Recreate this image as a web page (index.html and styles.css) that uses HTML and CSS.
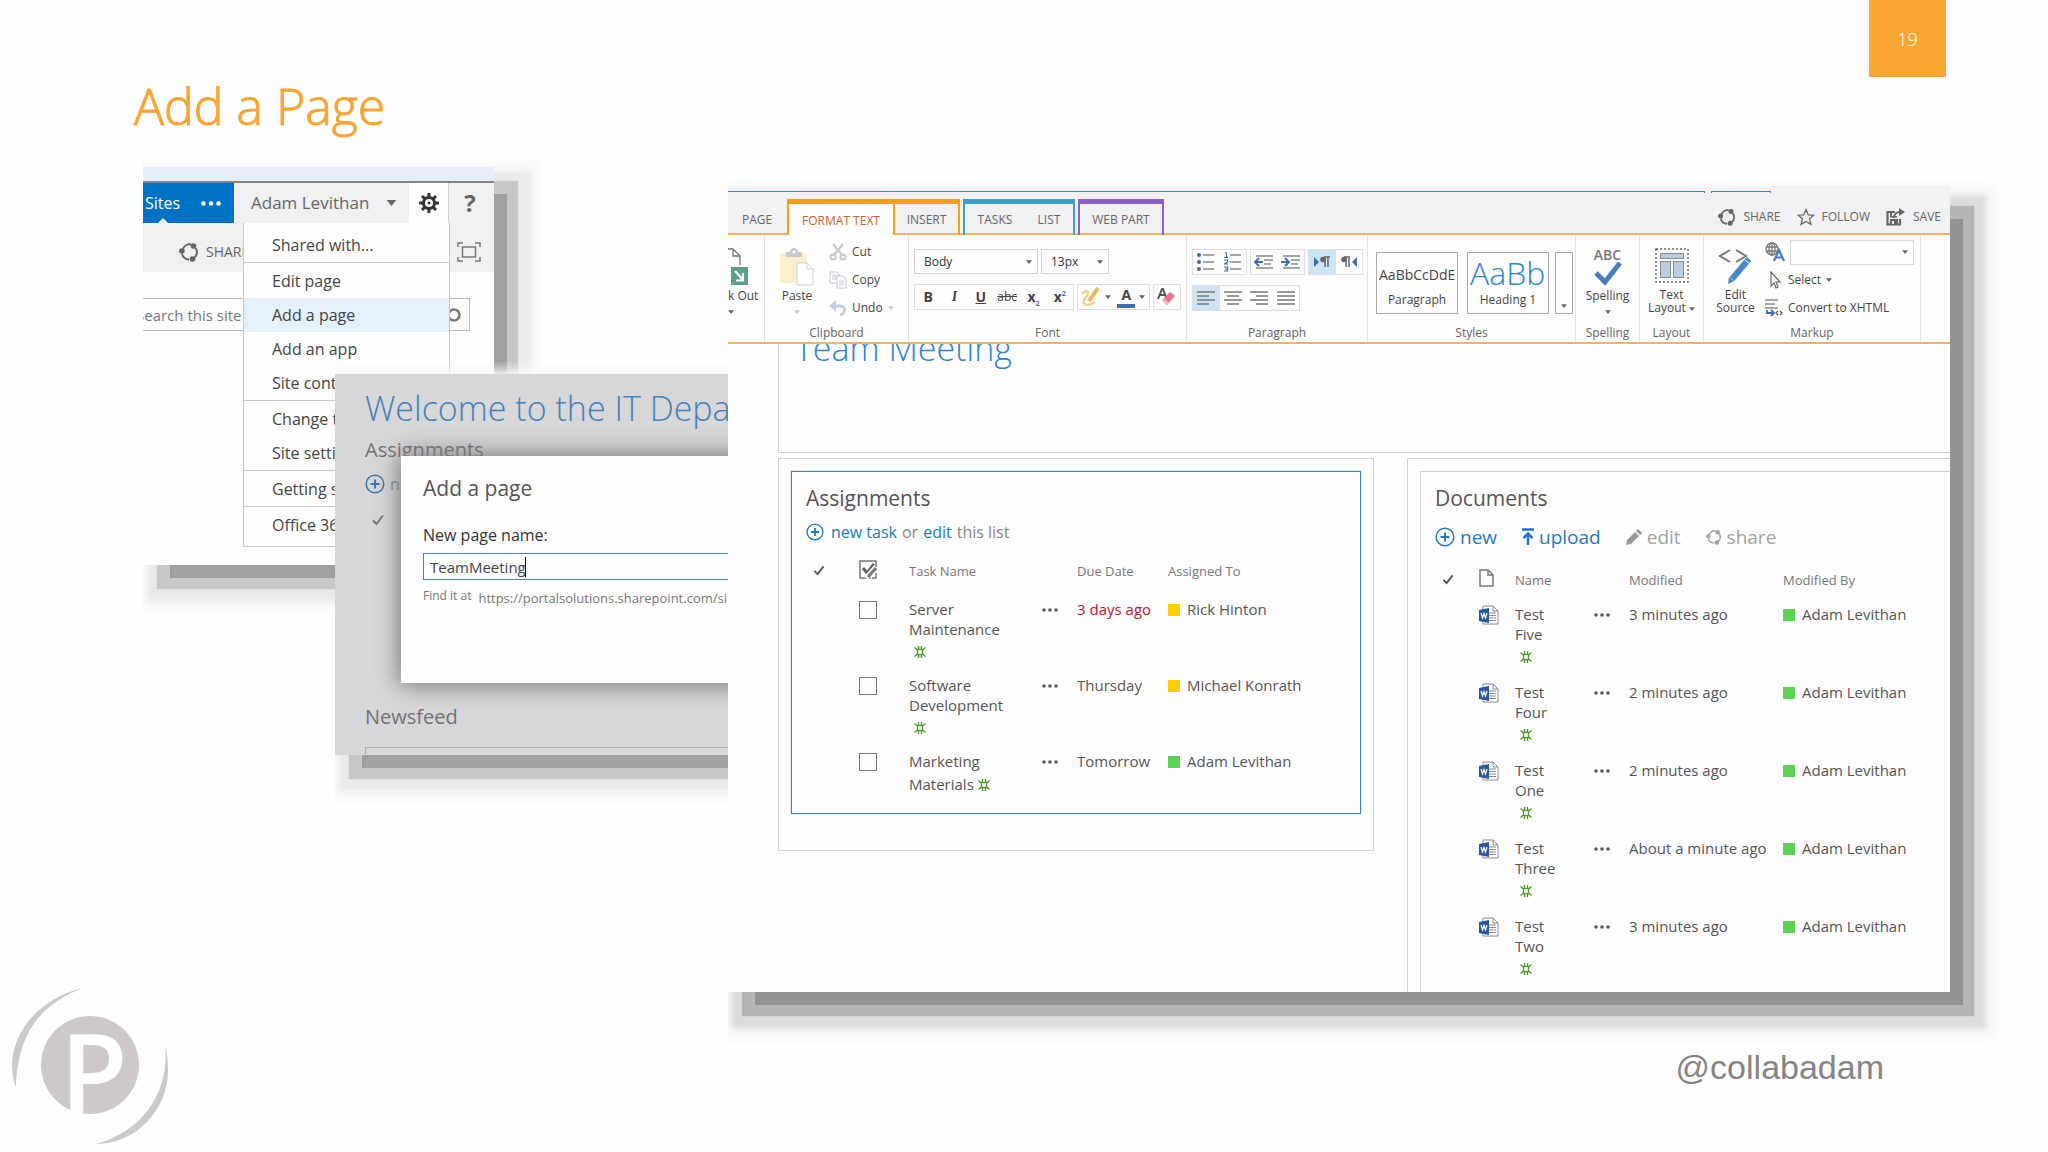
FILE: index.html
```html
<!DOCTYPE html>
<html lang="en">
<head>
<meta charset="utf-8">
<title>Add a Page</title>
<link rel="stylesheet" href="styles.css">
</head>
<body>
<svg class="sprite" aria-hidden="true">
  <symbol id="share" viewBox="0 0 20 20"><g fill="none" stroke="currentColor" stroke-width="2"><path d="M4 7a7 7 0 0 1 8-4.500M16.500 6a7 7 0 0 1-1 9.500M10 17.500A7.500 7.500 0 0 1 3 12"/></g><g fill="currentColor"><circle cx="14.500" cy="4" r="2.800"/><circle cx="2.900" cy="9" r="2.800"/><circle cx="13.500" cy="17" r="2.800"/></g></symbol>
  <symbol id="plus" viewBox="0 0 20 20"><circle cx="10" cy="10" r="8.800" fill="none" stroke="currentColor" stroke-width="1.500"/><path d="M10 5.500v9M5.500 10h9" stroke="currentColor" stroke-width="2"/></symbol>
  <symbol id="tick" viewBox="0 0 12 12"><path d="M1 6.500 4.500 10 11 1.500" fill="none" stroke="currentColor" stroke-width="2"/></symbol>
  <symbol id="new" viewBox="0 0 12 12"><rect x="3.500" y="3.500" width="5" height="5" fill="none" stroke="currentColor" stroke-width="1.300"/><path d="M.5 1.500l3 2.500M11.500 1.500l-3 2.500M.5 10.500l3-2.500M11.500 10.500l-3-2.500M4.500 0v3M7.500 0v3M4.500 9v3M7.500 9v3" stroke="currentColor" stroke-width="1.400"/></symbol>
  <symbol id="dots" viewBox="0 0 16 4"><g fill="currentColor"><circle cx="2" cy="2" r="1.800"/><circle cx="8" cy="2" r="1.800"/><circle cx="14" cy="2" r="1.800"/></g></symbol>
  <symbol id="down" viewBox="0 0 8 5"><path d="M0 0h8L4 5z" fill="currentColor"/></symbol>
  <symbol id="word" viewBox="0 0 20 20"><path d="M4 1h10l5 5v13H4z" fill="#fff" stroke="#8a8a90"/><path d="M14 1v5h5M9 8h8M9 10.500h8M9 13h8M9 15.500h8" fill="none" stroke="#8a8a90"/><path d="M0 5l10-2v15L0 16z" fill="#2b579a"/><path d="M2 8l1.500 5L5 8.500 6.500 13 8 8" fill="none" stroke="#fff" stroke-width="1.200"/></symbol>
</svg>

<main class="slide">
  <h1 class="slide-title">Add a Page</h1>
  <div class="slide-number">19</div>

  <section class="shot menu-shot">
    <div class="strip"></div>
    <nav class="suite">
      <a class="sites" href="#">Sites <svg class="dots-big"><use href="#dots"/></svg></a>
      <button class="user">Adam Levithan <svg class="caret-big"><use href="#down"/></svg></button>
      <button class="gear" aria-label="Settings"><svg width="20" height="20" viewBox="0 0 20 20"><circle cx="10" cy="10" r="5.500" fill="none" stroke="#333" stroke-width="3"/><circle cx="10" cy="10" r="1.500" fill="#333"/><path d="M10 0v4M10 16v4M0 10h4M16 10h4M3 3l3 3M14 14l3 3M17 3l-3 3M6 14l-3 3" stroke="#333" stroke-width="3"/></svg></button>
      <button class="help">?</button>
    </nav>
    <div class="share-row">
      <button class="share-btn"><svg class="i20"><use href="#share"/></svg>SHARE</button>
      <button class="focus" aria-label="Focus"><svg width="24" height="20" viewBox="0 0 24 20" fill="none" stroke="#777"><path d="M1 5V1h5M18 1h5v4M23 15v4h-5M6 19H1v-4" stroke-width="1.500"/><rect x="5.500" y="5" width="13" height="10" stroke-width="1.500"/></svg></button>
    </div>
    <div class="search">
      <input type="text" placeholder="Search this site" aria-label="Search this site">
      <button aria-label="Search"><svg width="16" height="16" viewBox="0 0 16 16" fill="none" stroke="#777" stroke-width="2.500"><circle cx="8" cy="7" r="5.500"/><path d="M4 11l-3 4"/></svg></button>
    </div>
    <ul class="menu">
      <li><a href="#">Shared with...</a></li>
      <li class="rule"><a href="#">Edit page</a></li>
      <li><a class="on" href="#">Add a page</a></li>
      <li><a href="#">Add an app</a></li>
      <li><a href="#">Site contents</a></li>
      <li class="rule"><a href="#">Change the look</a></li>
      <li><a href="#">Site settings</a></li>
      <li class="rule"><a href="#">Getting started</a></li>
      <li class="rule"><a href="#">Office 365</a></li>
    </ul>
  </section>

  <section class="shot dialog-shot">
    <h2 class="welcome">Welcome to the IT Depa</h2>
    <h3 class="dim">Assignments</h3>
    <p class="dim-new"><svg class="i20"><use href="#plus"/></svg>new task</p>
    <svg class="dim-tick"><use href="#tick"/></svg>
    <h3 class="dim feed">Newsfeed</h3>
    <div class="feed-box"></div>
    <form class="dialog">
      <h3>Add a page</h3>
      <label for="page-name">New page name:</label>
      <div class="name-box"><input id="page-name" type="text" value="TeamMeeting"><i class="cursor"></i></div>
      <p><span>Find it at</span> <span class="url">https://portalsolutions.sharepoint.com/si</span></p>
    </form>
  </section>

  <section class="shot page-shot">
    <div class="topline"><i></i><i></i></div>
    <div class="tabs">
      <button class="tab page">PAGE</button>
      <div class="tabset orange"><button class="tab current">FORMAT TEXT</button><button class="tab insert">INSERT</button></div>
      <div class="tabset teal"><button class="tab">TASKS</button><button class="tab">LIST</button></div>
      <div class="tabset purple"><button class="tab">WEB PART</button></div>
      <div class="promoted">
        <button><svg width="18" height="18"><use href="#share"/></svg>SHARE</button>
        <button><svg width="18" height="18" viewBox="0 0 18 18"><path d="M9 1.500l2.200 5.300 5.600.4-4.300 3.600 1.400 5.600L9 13.400l-4.900 3 1.400-5.600L1.200 7.200l5.600-.4z" fill="none" stroke="currentColor" stroke-width="1.300"/></svg>FOLLOW</button>
        <button><svg width="20" height="18" viewBox="0 0 20 18"><path d="M9 4H1.500v12.500H14V11" fill="none" stroke="currentColor" stroke-width="2.200"/><path d="M4 11h8v6H4zM4 4h2v4h5v1.500H4z" fill="currentColor"/><path d="M6 13h2v3H6z" fill="#f1f0f2"/><path d="M8 10c0-4 3-6 6-6" fill="none" stroke="currentColor" stroke-width="2"/><path d="M13 0l6 4-6 4z" fill="currentColor"/></svg>SAVE</button>
      </div>
    </div>

    <div class="ribbon">
      <div class="group g-out">
        <button class="big out"><svg width="21" height="38" viewBox="0 0 21 38"><path d="M0 1h5l7 7v9M5 1v7h7" fill="none" stroke="#777" stroke-width="1.300"/><rect x="3" y="19" width="17" height="18" fill="#5b9f86"/><path d="M7 23l8 9M15 25v7.500H8" fill="none" stroke="#fff" stroke-width="2.200"/></svg><span>k Out</span><svg class="caret"><use href="#down"/></svg></button>
      </div>
      <div class="group g-clip">
        <div class="tools">
          <button class="big paste"><svg width="36" height="38" viewBox="0 0 36 38"><rect x="1" y="5" width="27" height="30" rx="2" fill="#fbeecb"/><path d="M7 4h4a4 4 0 0 1 8 0h4v5H7z" fill="#c9c8ce"/><circle cx="15" cy="4" r="1.500" fill="#fff"/><path d="M18 15h10l6 6v16H18z" fill="#fff" stroke="#d0d0d6"/><path d="M28 15v6h6" fill="none" stroke="#d0d0d6"/></svg><span>Paste</span><svg class="caret pale"><use href="#down"/></svg></button>
          <div class="stack">
            <button><svg width="18" height="18" viewBox="0 0 18 18" fill="none" stroke="#c6c7d2" stroke-width="2"><path d="M4 1l9 11M14 1L5 12"/><circle cx="4" cy="14" r="2.500"/><circle cx="14" cy="14" r="2.500"/></svg>Cut</button>
            <button><svg width="18" height="18" viewBox="0 0 18 18" fill="#fff" stroke="#c6c7d2"><path d="M1 1h7l2 2v9H1zM3 4h5M3 6h5M3 8h5"/><path d="M8 5h6l3 3v9H8zM10 10h5M10 12h5M10 14h5"/></svg>Copy</button>
            <button><svg width="18" height="18" viewBox="0 0 18 18"><path d="M3 7h8c7 0 5 8 0 9" fill="none" stroke="#c3cfe6" stroke-width="3"/><path d="M0 7l7-6v12z" fill="#c3cfe6"/></svg>Undo <svg class="caret pale"><use href="#down"/></svg></button>
          </div>
        </div>
        <div class="label">Clipboard</div>
      </div>
      <div class="group g-font">
        <div class="tools col">
          <div class="line"><button class="combo w124">Body<svg class="caret"><use href="#down"/></svg></button><button class="combo w68">13px<svg class="caret"><use href="#down"/></svg></button></div>
          <div class="line">
            <div class="set six"><button><b>B</b></button><button><b class="serif">I</b></button><button><b class="under">U</b></button><button><s>abc</s></button><button><b>x<sub>2</sub></b></button><button><b>x<sup>2</sup></b></button></div>
            <div class="set two"><button aria-label="Highlight"><svg width="20" height="20" viewBox="0 0 20 20"><path d="M1 7c6-6 8-2 4 3s-3 8 1 8 6-2 8-3" fill="none" stroke="#f3d08f" stroke-width="2.500"/><path d="M17 1l-9 13" stroke="#eab766" stroke-width="4"/></svg><svg class="caret"><use href="#down"/></svg></button><button class="fc"><b>A</b><svg class="caret"><use href="#down"/></svg></button></div>
            <div class="set one"><button aria-label="Clear format"><svg width="20" height="20" viewBox="0 0 20 20"><path d="M1 12L5 2h1l3 8M3 8h5" fill="none" stroke="#555" stroke-width="2"/><path d="M5 13l8-8 5 4-8 9z" fill="#e8718d"/><path d="M5 13l2-2 5 5-2 2z" fill="#f5b4c3"/></svg></button></div>
          </div>
        </div>
        <div class="label">Font</div>
      </div>
      <div class="group g-para">
        <div class="tools col">
          <div class="line">
            <div class="set pair"><button aria-label="Bullets"><svg width="18" height="20" viewBox="0 0 18 20"><path d="M6 3h11M6 10h11M6 17h11" stroke="#888" stroke-width="1.500"/><g fill="#3d6cb4"><circle cx="2" cy="3" r="2"/><circle cx="2" cy="10" r="2"/><circle cx="2" cy="17" r="2"/></g></svg></button><button aria-label="Numbering"><svg width="18" height="20" viewBox="0 0 18 20"><path d="M6 3h11M6 10h11M6 17h11" stroke="#888" stroke-width="1.500"/><path d="M1 1h1.500v4M0 5.500h4M0 8h3.500v2L.5 12H4M0 15h3.500v4H0M1 17h2.500" fill="none" stroke="#3d6cb4" stroke-width="1.200"/></svg></button></div>
            <div class="set pair"><button aria-label="Outdent"><svg width="20" height="14" viewBox="0 0 20 14"><path d="M2 1h17M10 5h9M10 9h7M2 13h17" stroke="#888" stroke-width="1.500"/><path d="M9 7H2M5 3L1 7l4 4" fill="none" stroke="#3d6cb4" stroke-width="2"/></svg></button><button aria-label="Indent"><svg width="20" height="14" viewBox="0 0 20 14"><path d="M2 1h17M10 5h9M10 9h7M2 13h17" stroke="#888" stroke-width="1.500"/><path d="M0 7h7M4 3l4 4-4 4" fill="none" stroke="#3d6cb4" stroke-width="2"/></svg></button></div>
            <div class="set pair"><button class="on" aria-label="Left to right"><svg width="16" height="12" viewBox="0 0 16 12"><path d="M0 1l5 5-5 5z" fill="#3d6cb4"/><path d="M10 1h6M11 1v10M14 1v10" stroke="#666" stroke-width="1.500"/><circle cx="9" cy="3.500" r="2.800" fill="#666"/></svg></button><button aria-label="Right to left"><svg width="16" height="12" viewBox="0 0 16 12"><path d="M16 1l-5 5 5 5z" fill="#3d6cb4"/><path d="M3 1h6M5 1v10M8 1v10" stroke="#666" stroke-width="1.500"/><circle cx="3" cy="3.500" r="2.800" fill="#666"/></svg></button></div>
          </div>
          <div class="line">
            <div class="set four"><button class="on" aria-label="Align left"><svg width="18" height="14" viewBox="0 0 18 14"><path d="M0 1h18M0 5h12M0 9h18M0 13h12" stroke="#777" stroke-width="1.500"/></svg></button><button aria-label="Center"><svg width="18" height="14" viewBox="0 0 18 14"><path d="M0 1h18M3 5h12M0 9h18M3 13h12" stroke="#777" stroke-width="1.500"/></svg></button><button aria-label="Align right"><svg width="18" height="14" viewBox="0 0 18 14"><path d="M0 1h18M6 5h12M0 9h18M6 13h12" stroke="#777" stroke-width="1.500"/></svg></button><button aria-label="Justify"><svg width="18" height="14" viewBox="0 0 18 14"><path d="M0 1h18M0 5h18M0 9h18M0 13h18" stroke="#777" stroke-width="1.500"/></svg></button></div>
          </div>
        </div>
        <div class="label">Paragraph</div>
      </div>
      <div class="group g-styles">
        <div class="tools">
          <button class="style"><span class="sample">AaBbCcDdE</span><span>Paragraph</span></button>
          <button class="style"><span class="sample large">AaBb</span><span>Heading 1</span></button>
          <button class="more" aria-label="More styles"><svg class="caret"><use href="#down"/></svg></button>
        </div>
        <div class="label">Styles</div>
      </div>
      <div class="group g-narrow">
        <div class="tools"><button class="big"><b class="abc">ABC</b><svg width="28" height="24" viewBox="0 0 28 24"><path d="M2 11l9 9L26 1" fill="none" stroke="#4a7cba" stroke-width="5"/></svg><span>Spelling</span><svg class="caret"><use href="#down"/></svg></button></div>
        <div class="label">Spelling</div>
      </div>
      <div class="group g-narrow">
        <div class="tools"><button class="big"><svg width="34" height="38" viewBox="0 0 34 38"><rect x="1" y="1" width="32" height="33" fill="none" stroke="#666" stroke-width="1.500" stroke-dasharray="2 2"/><g fill="#b9cde3" stroke="#888"><path d="M5.500 5.500h23v5h-23zM5.500 13.500h10v16h-10zM18.500 13.500h10v16h-10z"/></g></svg><span class="two-line">Text<br>Layout <svg class="caret"><use href="#down"/></svg></span></button></div>
        <div class="label">Layout</div>
      </div>
      <div class="group g-markup">
        <div class="tools">
          <button class="big"><svg width="36" height="38" viewBox="0 0 36 38"><path d="M12 2L2 8l10 6M18 2l10 6-10 6" fill="none" stroke="#777" stroke-width="2"/><path d="M31 11L14 31" stroke="#4a88c5" stroke-width="6"/><path d="M11 29l5 4-6 3z" fill="#4a88c5"/><path d="M27 12l5 4" stroke="#fff"/></svg><span class="two-line">Edit<br>Source</span></button>
          <div class="stack">
            <button><svg width="20" height="20" viewBox="0 0 20 20"><g fill="none" stroke="#777" stroke-width="1.300"><circle cx="7" cy="7" r="6"/><ellipse cx="7" cy="7" rx="3" ry="6"/><path d="M1 5h12M1 9h12M7 1v12"/></g><path d="M9 19l5-11 5 11M11 15.500h6" fill="none" stroke="#3f7fc8" stroke-width="2.200"/></svg><span class="combo w124 empty"><svg class="caret"><use href="#down"/></svg></span></button>
            <button><svg width="18" height="18" viewBox="0 0 18 18"><path d="M6 1v14l3-3 2 5 2-1-2-5h4z" fill="#fff" stroke="#666" stroke-width="1.200"/></svg>Select <svg class="caret"><use href="#down"/></svg></button>
            <button><svg width="18" height="18" viewBox="0 0 18 18"><path d="M0 1h13M0 5h10M0 9h13" stroke="#888" stroke-width="1.500"/><path d="M2 11v3h6M6 11l3 3-3 3" fill="none" stroke="#3d6cb4" stroke-width="1.800"/><path d="M13 12l-2 2 2 2M15 12l2 2-2 2" fill="none" stroke="#555" stroke-width="1.300"/></svg>Convert to XHTML</button>
          </div>
        </div>
        <div class="label">Markup</div>
      </div>
    </div>

    <div class="canvas">
      <div class="zone head-zone"><h2>Team Meeting</h2></div>
      <div class="zones">
        <div class="zone task-zone">
          <article class="part selected">
            <h3>Assignments</h3>
            <p class="quick"><a href="#"><svg class="i18"><use href="#plus"/></svg>new task</a> or <a href="#">edit</a> this list</p>
            <table class="tasks">
              <colgroup><col class="c53"><col class="c50"><col class="c133"><col class="c35"><col class="c91"><col></colgroup>
              <thead><tr><th><svg class="tick"><use href="#tick"/></svg></th><th><svg width="18" height="19" viewBox="0 0 18 19"><path d="M12 18H1V1h16v6" fill="none" stroke="#777" stroke-width="1.500"/><path d="M4 8l4 5 7-9" fill="none" stroke="#666" stroke-width="3"/><path d="M17 7L7 18" stroke="#fefefe" stroke-width="5"/><path d="M17 8l-8 9" stroke="#777" stroke-width="3"/><path d="M17 13v5h-4" fill="none" stroke="#777" stroke-width="1.500"/></svg></th><th>Task Name</th><th></th><th>Due Date</th><th>Assigned To</th></tr></thead>
              <tbody>
                <tr><td></td><td><input type="checkbox" aria-label="Server Maintenance"></td><td>Server<br>Maintenance<svg class="fresh"><use href="#new"/></svg></td><td><svg class="dots"><use href="#dots"/></svg></td><td class="late">3 days ago</td><td><i class="sq away"></i>Rick Hinton</td></tr>
                <tr><td></td><td><input type="checkbox" aria-label="Software Development"></td><td>Software<br>Development<svg class="fresh"><use href="#new"/></svg></td><td><svg class="dots"><use href="#dots"/></svg></td><td>Thursday</td><td><i class="sq away"></i>Michael Konrath</td></tr>
                <tr><td></td><td><input type="checkbox" aria-label="Marketing Materials"></td><td>Marketing<br>Materials <svg class="fresh inline"><use href="#new"/></svg></td><td><svg class="dots"><use href="#dots"/></svg></td><td>Tomorrow</td><td><i class="sq"></i>Adam Levithan</td></tr>
              </tbody>
            </table>
          </article>
        </div>
        <div class="zone doc-zone">
          <article class="part">
            <h3>Documents</h3>
            <div class="actions">
              <a href="#"><svg class="i20"><use href="#plus"/></svg>new</a>
              <a href="#"><svg width="12" height="18" viewBox="0 0 12 18"><path d="M0 1.500h12M6 17V6M1.500 10L6 5.500l4.500 4.500" fill="none" stroke="currentColor" stroke-width="2.500"/></svg>upload</a>
              <a class="off" href="#"><svg width="16" height="16" viewBox="0 0 16 16" fill="#999"><path d="M0 16l1-5 8-8 4 4-8 8zM10 2l2-2 4 4-2 2z"/></svg>edit</a>
              <a class="off" href="#"><svg class="i16"><use href="#share"/></svg>share</a>
            </div>
            <table class="docs">
              <colgroup><col class="c44"><col class="c36"><col class="c79"><col class="c35"><col class="c154"><col></colgroup>
              <thead><tr><th><svg class="tick"><use href="#tick"/></svg></th><th><svg width="15" height="18" viewBox="0 0 15 18"><path d="M1 1h8l5 5v11H1zM9 1v5h5" fill="none" stroke="#777" stroke-width="1.500"/></svg></th><th>Name</th><th></th><th>Modified</th><th>Modified By</th></tr></thead>
              <tbody>
                <tr><td></td><td><svg class="i20"><use href="#word"/></svg></td><td>Test<br>Five<svg class="fresh"><use href="#new"/></svg></td><td><svg class="dots"><use href="#dots"/></svg></td><td>3 minutes ago</td><td><i class="sq"></i>Adam Levithan</td></tr>
                <tr><td></td><td><svg class="i20"><use href="#word"/></svg></td><td>Test<br>Four<svg class="fresh"><use href="#new"/></svg></td><td><svg class="dots"><use href="#dots"/></svg></td><td>2 minutes ago</td><td><i class="sq"></i>Adam Levithan</td></tr>
                <tr><td></td><td><svg class="i20"><use href="#word"/></svg></td><td>Test<br>One<svg class="fresh"><use href="#new"/></svg></td><td><svg class="dots"><use href="#dots"/></svg></td><td>2 minutes ago</td><td><i class="sq"></i>Adam Levithan</td></tr>
                <tr><td></td><td><svg class="i20"><use href="#word"/></svg></td><td>Test<br>Three<svg class="fresh"><use href="#new"/></svg></td><td><svg class="dots"><use href="#dots"/></svg></td><td>About a minute ago</td><td><i class="sq"></i>Adam Levithan</td></tr>
                <tr><td></td><td><svg class="i20"><use href="#word"/></svg></td><td>Test<br>Two<svg class="fresh"><use href="#new"/></svg></td><td><svg class="dots"><use href="#dots"/></svg></td><td>3 minutes ago</td><td><i class="sq"></i>Adam Levithan</td></tr>
              </tbody>
            </table>
          </article>
        </div>
      </div>
    </div>
  </section>

  <footer>
    <svg class="logo" width="160" height="160" viewBox="0 0 160 160" role="img" aria-label="P logo">
      <g fill="#cdc9cb"><circle cx="79" cy="77" r="49"/><path d="M72 0C28 10 2 44 1 76c0 8 1 16 4 24C6 52 24 18 72 0zM154 57c5 44-20 86-69 99 40 0 72-34 72-74 0-9-1-17-3-25z"/></g>
      <text x="49" y="126" class="logo-letter">P</text>
    </svg>
    <span class="handle">@collabadam</span>
  </footer>
</main>
</body>
</html>
```
FILE: styles.css
```css
* { box-sizing: border-box; }
body { margin: 0; background: #fefefe; color: #555; font: 15px/20px "Open Sans", "Noto Sans", sans-serif; }
h1, h2, h3, p, ul { margin: 0; padding: 0; font-weight: 400; }
button, input { font: inherit; color: inherit; margin: 0; padding: 0; border: 0; background: none; }
a { color: #2079c4; text-decoration: none; }
svg { flex: none; }
.sprite { position: absolute; width: 0; height: 0; }
.i16 { width: 16px; height: 16px; }
.i18 { width: 18px; height: 18px; }
.i20 { width: 20px; height: 20px; }

.slide { position: relative; display: flex; flex-direction: column; min-height: 100vh; overflow: hidden; }
.slide-title { padding: 74px 134px 0; font-size: 50px; line-height: 64px; font-weight: 300; color: #f9a533; -webkit-text-stroke: 1px #f9a533; }
.slide-number { position: absolute; top: 0; right: 102px; width: 77px; height: 77px; background: #f9a533; color: #fff; font-size: 18px; line-height: 78px; font-weight: 300; text-align: center; }

/* stepped drop shadow, falling to the right and below only */
.shot { position: absolute; background: #fefefe; box-shadow: 20px 20px 0 -7px #a09fa1, 19px 19px 1px 5px #c7c6c8, 20px 20px 5px 16px #e9e8ea, 20px 20px 10px 25px #f8f7f9; clip-path: inset(-12px -80px -80px 0); }

/* settings menu */
.menu-shot { top: 167px; left: 143px; width: 351px; height: 398px; }
.strip { height: 16px; background: #e5edf8; border-bottom: 2px solid #808388; }
.suite { display: flex; height: 40px; background: #f1f0f1; align-items: stretch; font-size: 17px; }
.sites { position: relative; display: flex; align-items: center; gap: 21px; width: 91px; padding-left: 2px; background: #0072c6; color: #fff; font-size: 16px; }
.sites::after { content: ""; position: absolute; left: 15px; bottom: 0; border: 5px solid transparent; border-top: 0; border-bottom-color: #f1f0f1; }
.dots-big { width: 20px; height: 5px; }
.user { display: flex; align-items: center; gap: 17px; width: 175px; padding-left: 17px; color: #666; }
.caret-big { width: 11px; height: 6px; }
.gear { width: 40px; background: #fefefe; border-right: 1px solid #ccc; display: flex; align-items: center; justify-content: center; }
.help { flex: 1; padding-right: 3px; font-size: 24px; font-weight: 700; color: #666; }
.share-row { display: flex; height: 49px; background: #f1f0f1; align-items: center; justify-content: space-between; padding: 8px 13px 0 36px; }
.share-btn { display: flex; align-items: center; gap: 7px; font-size: 14px; color: #666; }
.focus { display: flex; }
.search { display: flex; height: 33px; margin: 26px 24px 0 -8px; border: 1px solid #bbb; }
.search input { flex: 1; width: 0; font-size: 15px; outline: 0; }
.search input::placeholder { color: #777; opacity: 1; }
.search button { width: 31px; padding-top: 6px; }
.menu { position: absolute; top: 56px; left: 100px; width: 207px; padding: 5px 0 4px; list-style: none; background: #fefefe; border: 1px solid #c8c6ca; border-top: 0; font-size: 16px; }
.menu a { display: block; height: 34px; padding-left: 28px; line-height: 34px; color: #444; }
.menu .rule { padding-top: 1px; border-top: 1px solid #c8c6ca; }
.menu .on { background: #e4f0fa; }

/* add-a-page dialog */
.dialog-shot { top: 374px; left: 335px; width: 420px; height: 381px; background: #d7d6d8; padding: 12px 0 0 30px; }
.welcome { font-size: 34px; line-height: 44px; font-weight: 300; color: #4682b4; white-space: nowrap; }
.dim { font-size: 20px; line-height: 28px; margin-top: 6px; color: #737274; }
.dim-new { display: flex; gap: 5px; margin-top: 10px; align-items: center; color: #888; font-size: 16px; }
.dim-new svg { color: #3b78a8; }
.dim-tick { display: block; width: 12px; height: 12px; margin: 20px 0 0 7px; color: #777; }
.feed { margin-top: 177px; }
.feed-box { height: 7px; margin-top: 16px; border: 1px solid #b0afb1; border-bottom: 0; }
.dialog { position: absolute; top: 82px; left: 66px; right: 0; height: 227px; padding: 18px 0 0 22px; background: #fefefe; box-shadow: 0 0 22px 2px #777; clip-path: inset(-30px 0 -30px -30px); }
.dialog h3 { font-size: 21px; line-height: 28px; color: #555; }
.dialog label { display: block; margin-top: 21px; font-size: 16px; line-height: 24px; color: #333; }
.name-box { position: relative; height: 27px; margin-top: 6px; padding-left: 6px; border: 1px solid #4a8a9d; }
.name-box input { width: 100%; height: 25px; color: #444; outline: 0; }
.cursor { position: absolute; left: 101px; top: 3px; width: 1px; height: 20px; background: #000; }
.dialog p { display: flex; gap: 7px; margin-top: 6px; font-size: 12px; color: #777; white-space: nowrap; }
.url { padding-top: 2px; font-size: 13px; }

/* page editor */
.page-shot { top: 192px; left: 728px; right: 98px; height: 800px; display: flex; flex-direction: column; box-shadow: 20px 20px 0 -7px #929193, 19px 19px 1px 5px #b6b5b7, 20px 20px 5px 16px #dcdbdd, 20px 20px 10px 25px #f5f4f6, 0 -6px 0 0 #f3f0f2; }
.topline { display: flex; gap: 8px; height: 1px; background: #f1f0f2; }
.topline i { height: 1px; width: 976px; box-shadow: 0 0 0 1px #3d86c6; }
.topline i + i { width: 58px; }
.tabs { display: flex; height: 42px; padding-top: 6px; background: #f1f0f2; border-bottom: 2px solid #f5b45a; font-size: 12px; color: #666; }
.tab { flex: 1; padding-top: 3px; white-space: nowrap; }
.page { flex: none; width: 59px; padding: 7px 0 0 14px; text-align: left; }
.tabset { display: flex; height: 36px; margin-right: 3px; padding-bottom: 2px; border: 2px solid; border-top-width: 5px; border-bottom: 0; }
.orange { width: 173px; height: 36px; padding-bottom: 0; border-color: #fa9f0c; }
.orange .current { flex: none; width: 106px; background: #fefefe; color: #c8602a; border-right: 2px solid #fa9f0c; }
.orange .insert { border-bottom: 2px solid #f5b45a; }
.teal { width: 112px; border-color: #3ba2c4; }
.teal .tab { flex: auto; }
.purple { width: 86px; border-color: #8c5fc4; }
.promoted { display: flex; gap: 16px; margin-left: auto; padding: 2px 9px 0 0; align-items: center; color: #666; }
.promoted button { display: flex; gap: 7px; align-items: center; }

.ribbon { display: flex; height: 109px; overflow: hidden; border-bottom: 2px solid #f5b45a; font-size: 12px; line-height: 14px; color: #444; background: #fefefe; flex: none; }
.group { display: flex; flex-direction: column; flex: none; padding-top: 5px; border-right: 1px solid #e4e2e6; }
.g-out { width: 37px; overflow: hidden; }
.g-clip { width: 144px; }
.g-font { width: 278px; }
.g-para { width: 181px; }
.g-styles { width: 208px; }
.g-narrow { width: 64px; }
.g-markup { width: 217px; }
.label { line-height: 18px; text-align: center; color: #666; }
.tools { display: flex; flex: 1; min-height: 0; }
.col { flex-direction: column; gap: 10px; padding: 9px 0 0 5px; }
.caret { width: 6px; height: 4px; color: #666; vertical-align: middle; }
.pale { color: #ccc; }
.big { display: flex; flex-direction: column; align-items: center; width: 63px; padding-top: 8px; gap: 2px; line-height: 13px; }
.big > .caret { margin-top: 6px; }
.big > span { padding-top: 1px; }
.big .two-line { padding-top: 0; }
.out { align-items: flex-start; width: 37px; }
.paste { width: 64px; padding: 8px 0 0; }
.abc { font-size: 14px; line-height: 14px; color: #777; font-weight: 600; margin-bottom: -2px; }
.stack { display: flex; flex-direction: column; margin-top: -2px; }
.stack button { display: flex; align-items: center; gap: 5px; height: 28px; white-space: nowrap; }
.g-markup .stack { margin-left: -2px; }
.line { display: flex; gap: 3px; }
.combo { display: flex; align-items: center; justify-content: space-between; height: 25px; padding: 0 5px 0 9px; border: 1px solid #d4d3d8; color: #333; }
.empty { justify-content: flex-end; }
.w124 { width: 124px; }
.w68 { width: 68px; }
.set { display: flex; height: 26px; border: 1px solid #dfdee3; }
.set button { flex: 1; display: flex; align-items: center; justify-content: center; gap: 4px; }
.set .on { background: #cce4f5; }
.set b { font-size: 14px; }
.set sub, .set sup { font-size: 7px; line-height: 0; color: #3d6cb4; }
.serif { font-family: "Liberation Serif", serif; font-style: italic; }
.under { text-decoration: underline; }
.six { width: 160px; }
.two { width: 73px; }
.one { width: 28px; }
.pair { width: 55px; }
.four { width: 108px; }
.fc b { width: 18px; line-height: 18px; border-bottom: 4px solid #3f6fae; }
.g-styles .tools { gap: 9px; padding: 12px 0 0 8px; }
.style { display: flex; flex-direction: column; justify-content: flex-end; align-items: center; gap: 5px; width: 82px; height: 62px; padding: 0 2px 6px; border: 1px solid #aaa; overflow: hidden; }
.sample { align-self: stretch; font-size: 14px; line-height: 20px; text-align: left; white-space: nowrap; overflow: hidden; margin-bottom: 3px; }
.large { font-size: 32px; line-height: 38px; font-weight: 300; color: #2f84cf; margin-bottom: -4px; }
.more { display: flex; align-items: flex-end; justify-content: center; width: 18px; height: 62px; margin-left: -3px; padding-bottom: 5px; border: 1px solid #aaa; }

.canvas { flex: 1; display: flex; flex-direction: column; min-height: 0; overflow: hidden; padding-left: 50px; }
.zone { border: 1px solid #d0cfd2; }
.head-zone { flex: none; height: 109px; margin-right: -2px; border-top: 0; padding-left: 16px; overflow: hidden; }
.head-zone h2 { margin-top: -18px; font-size: 34px; line-height: 44px; font-weight: 300; color: #2f84cf; }
.zones { display: flex; align-items: flex-start; gap: 33px; margin-top: 5px; }
.task-zone { width: 596px; padding: 12px 12px 36px; flex: none; }
.doc-zone { flex: 1; padding: 12px 0 0 12px; border-right: 0; border-bottom: 0; }
.part { border: 1px solid #d0cfd2; padding: 12px 0 16px 14px; }
.doc-zone .part { border-right: 0; }
.selected { border-color: #3d86c6; padding-bottom: 2px; box-shadow: 0 0 1px #3d86c6; }
.part h3 { font-size: 21px; line-height: 28px; }
.quick { display: flex; align-items: center; gap: 5px; margin-top: 8px; font-size: 16px; line-height: 24px; color: #888; }
.quick a:first-child { display: flex; align-items: center; gap: 7px; }
.actions { display: flex; gap: 25px; margin-top: 11px; font-size: 19px; line-height: 28px; }
.actions a { display: flex; align-items: center; gap: 5px; }
.actions .off { color: #a3a2a4; }
table { width: 100%; table-layout: fixed; border-collapse: collapse; }
th, td { padding: 0; text-align: left; vertical-align: top; font-weight: 400; }
th { font-size: 13px; line-height: 24px; color: #777; }
th svg { display: block; margin-top: 1px; }
th .tick { width: 12px; height: 11px; margin: 6px 0 0 7px; color: #555; }
.tasks { margin-top: 15px; }
.tasks thead tr { height: 40px; }
.tasks tbody tr { height: 76px; }
.tasks tbody tr:last-child { height: 60px; }
.docs { margin-top: 17px; }
.docs thead tr { height: 36px; }
.docs tbody tr { height: 78px; }
.c35 { width: 35px; } .c36 { width: 36px; } .c44 { width: 44px; } .c50 { width: 50px; } .c53 { width: 53px; }
.c79 { width: 79px; } .c91 { width: 91px; } .c133 { width: 133px; } .c154 { width: 154px; }
.tasks input { appearance: none; display: block; width: 18px; height: 18px; margin-top: 2px; border: 1px solid #777; background: #fefefe; }
.docs .i20 { display: block; margin-top: 1px; }
.dots { display: block; width: 16px; height: 4px; margin-top: 9px; color: #555; }
.fresh { display: block; width: 12px; height: 12px; margin: 7px 0 0 5px; color: #4c9a2a; }
.inline { display: inline-block; margin: 8px 0 0; vertical-align: -1px; }
.late { color: #c8102e; }
.sq { display: inline-block; width: 12px; height: 12px; margin-right: 7px; vertical-align: -1px; background: #5bd355; }
.away { background: #ffcf00; }

footer { display: flex; align-items: flex-end; justify-content: space-between; margin-top: auto; padding: 0 164px 4px 11px; }
.logo-letter { font-size: 110px; font-weight: 600; fill: #fefefe; }
.handle { padding-bottom: 61px; font: 34px/40px "Liberation Sans", sans-serif; color: #858486; }
```
